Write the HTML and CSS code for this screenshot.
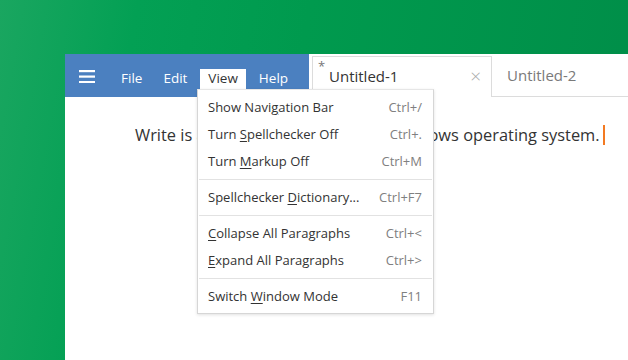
FILE: index.html
```html
<!DOCTYPE html>
<html>
<head>
<meta charset="utf-8">
<link rel="stylesheet" href="styles.css">
</head>
<body>
<div class="window">
  <div class="titlebar">
    <div class="menubar">
      <svg class="hamburger" width="16" height="14" viewBox="0 0 16 14">
        <rect x="0" y="1" width="16" height="2.2" fill="#fff"/>
        <rect x="0" y="6.5" width="16" height="2.2" fill="#fff"/>
        <rect x="0" y="12" width="16" height="2.2" fill="#fff"/>
      </svg>
      <div class="mitem">File</div>
      <div class="mitem">Edit</div>
      <div class="mitem active">View</div>
      <div class="mitem">Help</div>
    </div>
    <div class="tabs">
      <div class="tab current">
        <span class="star">*</span>
        <span class="tname">Untitled-1</span>
        <span class="close">×</span>
      </div>
      <div class="tab other">
        <span class="tname">Untitled-2</span>
      </div>
      <div class="tabfill"></div>
    </div>
  </div>
  <div class="content">
    <p class="doc">Write is a word processor for the Windows operating system.<span class="caret"></span></p>
  </div>
  <div class="dropdown">
    <div class="ditem"><span>Show Navi<u>g</u>ation Bar</span><span class="key">Ctrl+/</span></div>
    <div class="ditem"><span>Turn <u>S</u>pellchecker Off</span><span class="key">Ctrl+.</span></div>
    <div class="ditem"><span>Turn <u>M</u>arkup Off</span><span class="key">Ctrl+M</span></div>
    <div class="sep"></div>
    <div class="ditem"><span>Spellchecker <u>D</u>ictionary...</span><span class="key">Ctrl+F7</span></div>
    <div class="sep"></div>
    <div class="ditem"><span><u>C</u>ollapse All Paragraphs</span><span class="key">Ctrl+&lt;</span></div>
    <div class="ditem"><span><u>E</u>xpand All Paragraphs</span><span class="key">Ctrl+&gt;</span></div>
    <div class="sep"></div>
    <div class="ditem"><span>Switch <u>W</u>indow Mode</span><span class="key">F11</span></div>
  </div>
</div>
</body>
</html>
```
FILE: styles.css
```css
html, body {
  margin: 0;
  padding: 0;
}
body {
  width: 628px;
  height: 360px;
  overflow: hidden;
  font-family: "Open Sans", "Noto Sans", sans-serif;
  background: linear-gradient(100deg, #1aa660 0%, #03a054 20%, #009a4e 45%, #008d48 100%);
}
.window {
  position: relative;
  margin: 54px 0 0 65px;
  width: 563px;
  height: 306px;
  overflow: hidden;
  background: #fff;
}
.titlebar {
  display: flex;
  height: 43px;
}
.menubar {
  width: 244px;
  flex: none;
  background: #4b80c0;
  display: flex;
  align-items: flex-end;
  padding-left: 14px;
  box-sizing: border-box;
}
.hamburger {
  align-self: flex-start;
  margin-top: 15px;
  margin-right: 18px;
  flex: none;
}
.mitem {
  height: 28px;
  line-height: 18px;
  padding: 0 8px;
  margin-right: 5px;
  color: #fff;
  font-size: 13.5px;
  box-sizing: border-box;
}
.mitem.active {
  background: #fff;
  color: #333;
}
.tabs {
  flex: 1;
  display: flex;
  align-items: flex-end;
  padding-left: 3px;
}
.tab {
  position: relative;
  height: 41px;
  box-sizing: border-box;
  display: flex;
  align-items: center;
  flex: none;
}
.tab.current {
  width: 180px;
  border: 1px solid #dcdcdc;
  border-bottom: none;
  padding-left: 16px;
  padding-right: 10px;
  justify-content: space-between;
}
.star {
  position: absolute;
  left: 5px;
  top: 0px;
  font-size: 13px;
  color: #777;
}
.tname {
  font-size: 15px;
  color: #333;
  padding-bottom: 3px;
}
.close {
  font-size: 19px;
  color: #a8a8a8;
  font-weight: 300;
  padding-bottom: 3px;
}
.tab.other {
  width: 140px;
  padding-left: 15px;
  border-bottom: 1px solid #dcdcdc;
}
.tab.other .tname {
  color: #7a7a7a;
}
.tabfill {
  flex: 1;
  height: 41px;
  box-sizing: border-box;
  border-bottom: 1px solid #dcdcdc;
}
.content {
  padding: 26px 0 0 70px;
}
.doc {
  margin: 0;
  font-size: 16.4px;
  color: #333;
  line-height: 24px;
  white-space: nowrap;
}
.caret {
  display: inline-block;
  width: 2px;
  height: 20px;
  background: #f37a22;
  vertical-align: -4px;
  margin-left: 3px;
}
.dropdown {
  position: absolute;
  left: 132px;
  top: 35px;
  width: 237px;
  box-sizing: border-box;
  background: #fff;
  border: 1px solid #d6d6d6;
  border-top-color: #e6e6e6;
  box-shadow: 0 1px 3px rgba(0,0,0,0.12);
  padding: 4px 0 3px;
  z-index: 5;
}
.ditem {
  display: flex;
  justify-content: space-between;
  height: 27px;
  line-height: 27px;
  font-size: 13px;
  color: #333;
  padding: 0 11px 0 10px;
}
.ditem u {
  text-decoration-thickness: 1px;
  text-underline-offset: 2px;
}
.key {
  color: #808080;
}
.sep {
  height: 1px;
  background: #e2e2e2;
  margin: 4px 1px;
}
```
